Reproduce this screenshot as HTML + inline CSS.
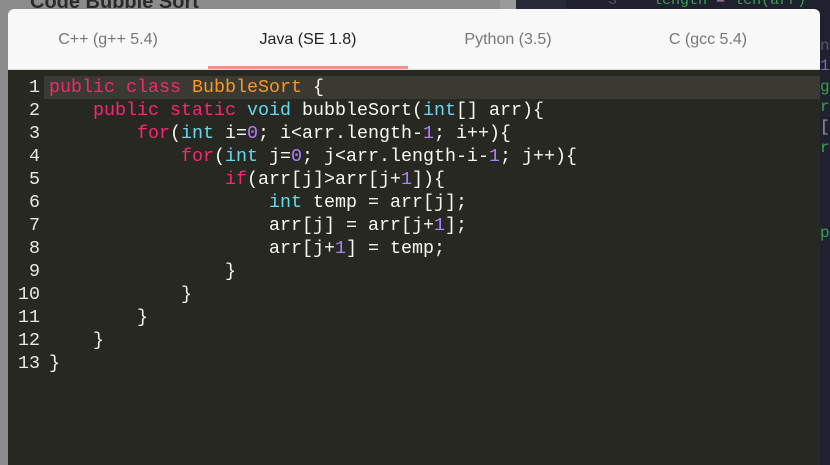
<!DOCTYPE html>
<html><head><meta charset="utf-8"><style>
*{margin:0;padding:0;box-sizing:border-box}
html,body{width:830px;height:465px;overflow:hidden}
body{position:relative;background:#8c8c8c;font-family:"Liberation Sans",sans-serif}
.right{position:absolute;left:516px;top:0;width:314px;height:465px;background:#1f2130}
.rtop{position:absolute;left:516px;top:0;width:50px;height:9px;background:#262a38}
.hdr{position:absolute;left:30px;top:-9px;font-size:20px;font-weight:bold;color:#2a2a2a}
.gstrip{position:absolute;left:500px;top:0;width:16px;height:9px;background:#9a9a9a}
.rt{position:absolute;left:608px;top:-8px;font:15px "Liberation Mono",monospace;color:#3aa04a}
.side{position:absolute;left:820px;font:16px "Liberation Mono",monospace}
.modal{position:absolute;left:8px;top:9px;width:812px;height:456px;background:#272822;border-radius:6px 6px 0 0;overflow:hidden}
.tabs{height:61px;background:#f8f8f8;position:relative;border-bottom:1px solid #ddd}
.tab{position:absolute;top:0;width:200px;height:61px;line-height:62px;text-align:center;font-size:16px;color:#777}
.tab.a{color:#222}
.ul{position:absolute;left:200px;top:57px;width:200px;height:3px;background:#f48f8a}
.code{position:absolute;top:67px;left:0;width:812px;font:18.33px/23px "Liberation Mono",monospace;color:#f8f8f2}
.ln{position:relative;height:23px;white-space:pre}
.ln.hl::before{content:"";position:absolute;left:36px;right:0;top:0;bottom:0;background:#3a3a33}
.n{position:relative;display:inline-block;width:32px;text-align:right;color:#e8e8e8;margin-right:9px}
.t{position:relative}
.k{color:#f92672}.c{color:#66d9ef}.o{color:#fd971f}.p{color:#ae81ff}
</style></head><body>
<div class="hdr">Code Bubble Sort</div>
<div class="right"></div><div class="gstrip"></div><div class="rtop"></div>
<div class="rt"><span style="color:#556">3</span>&nbsp;&nbsp;&nbsp;&nbsp;length <span style="color:#c8c">=</span> len(arr)</div>
<div class="side" style="top:37px;color:#556">n</div>
<div class="side" style="top:57px;color:#7a6aa8">1</div>
<div class="side" style="top:78px;color:#3aa04a">g</div>
<div class="side" style="top:98px;color:#3aa04a">r</div>
<div class="side" style="top:118px;color:#999">[</div>
<div class="side" style="top:139px;color:#3aa04a">r</div>
<div class="side" style="top:224px;color:#3aa04a">p</div>
<div class="modal">
<div class="tabs">
<div class="tab" style="left:0">C++ (g++ 5.4)</div>
<div class="tab a" style="left:200px">Java (SE 1.8)</div>
<div class="tab" style="left:400px">Python (3.5)</div>
<div class="tab" style="left:600px">C (gcc 5.4)</div>
<div class="ul"></div>
</div>
<div class="code">
<div class="ln hl"><span class="n">1</span><span class="t"><span class="k">public</span> <span class="k">class</span> <span class="o">BubbleSort</span> {</span></div>
<div class="ln"><span class="n">2</span><span class="t">    <span class="k">public</span> <span class="k">static</span> <span class="c">void</span> bubbleSort(<span class="c">int</span>[] arr){</span></div>
<div class="ln"><span class="n">3</span><span class="t">        <span class="k">for</span>(<span class="c">int</span> i=<span class="p">0</span>; i&lt;arr.length-<span class="p">1</span>; i++){</span></div>
<div class="ln"><span class="n">4</span><span class="t">            <span class="k">for</span>(<span class="c">int</span> j=<span class="p">0</span>; j&lt;arr.length-i-<span class="p">1</span>; j++){</span></div>
<div class="ln"><span class="n">5</span><span class="t">                <span class="k">if</span>(arr[j]&gt;arr[j+<span class="p">1</span>]){</span></div>
<div class="ln"><span class="n">6</span><span class="t">                    <span class="c">int</span> temp = arr[j];</span></div>
<div class="ln"><span class="n">7</span><span class="t">                    arr[j] = arr[j+<span class="p">1</span>];</span></div>
<div class="ln"><span class="n">8</span><span class="t">                    arr[j+<span class="p">1</span>] = temp;</span></div>
<div class="ln"><span class="n">9</span><span class="t">                }</span></div>
<div class="ln"><span class="n">10</span><span class="t">            }</span></div>
<div class="ln"><span class="n">11</span><span class="t">        }</span></div>
<div class="ln"><span class="n">12</span><span class="t">    }</span></div>
<div class="ln"><span class="n">13</span><span class="t">}</span></div>
</div>
</div>
</body></html>
